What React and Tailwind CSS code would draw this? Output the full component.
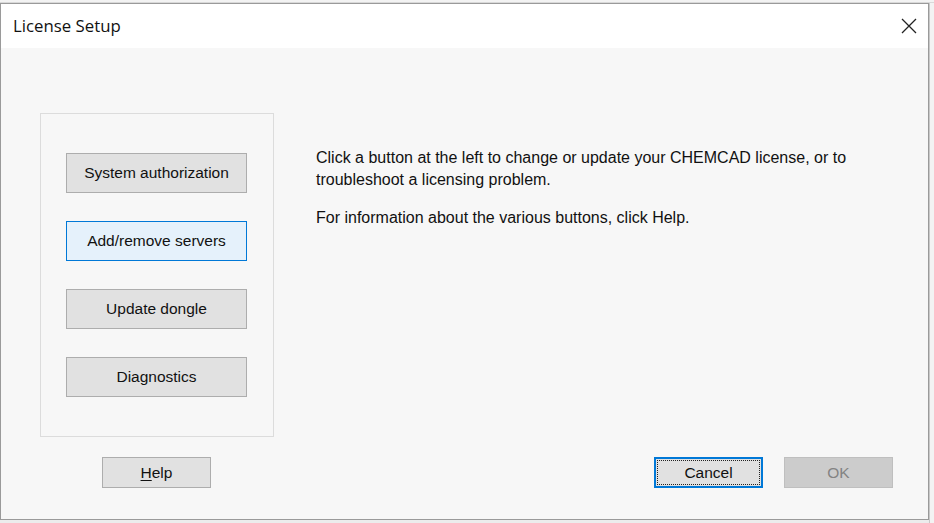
import React from "react";

const btnFont = { fontFamily: '"Liberation Sans", Arial, sans-serif' };

function SideButton({ label, active }) {
  return (
    <button
      className={
        "w-[181px] h-[40px] text-[15.5px] text-[#111] border " +
        (active ? "bg-[#e5f1fb] border-[#0078d7]" : "bg-[#e1e1e1] border-[#adadad]")
      }
      style={btnFont}
    >
      {label}
    </button>
  );
}

export default function App() {
  return (
    <div className="w-[934px] h-[523px] bg-[#ececec] overflow-hidden flex flex-col">
      <div className="h-[3px] shrink-0 bg-[#f3f3f3] border-b border-[#d9d9d9]" />
      <div className="flex flex-1 min-h-0">
        <div className="w-[929px] h-[517px] flex flex-col border border-[#9a9a9a] bg-[#f7f7f7]">
          {/* title bar */}
          <div className="h-[44px] bg-white flex items-center justify-between shrink-0">
            <span
              className="pl-[12px] text-[16.8px] text-[#111]"
              style={{ fontFamily: '"Open Sans", "Noto Sans", sans-serif' }}
            >
              License Setup
            </span>
            <svg width="16" height="16" viewBox="0 0 16 16" className="mr-[11px]">
              <path d="M1 1 L15 15 M15 1 L1 15" stroke="#222" strokeWidth="1.3" />
            </svg>
          </div>

          {/* body */}
          <div className="flex-1 flex flex-col" style={btnFont}>
            <div className="flex pt-[65px]">
              <div className="ml-[39px] w-[234px] h-[324px] border border-[#dcdcdc] flex flex-col pl-[25px] pt-[39px] gap-[28px]">
                <SideButton label="System authorization" />
                <SideButton label="Add/remove servers" active />
                <SideButton label="Update dongle" />
                <SideButton label="Diagnostics" />
              </div>
              <div className="ml-[42px] pt-[34px] text-[16px] leading-[22px] text-[#111]">
                <p>Click a button at the left to change or update your CHEMCAD license, or to</p>
                <p>troubleshoot a licensing problem.</p>
                <p className="mt-[16px]">For information about the various buttons, click Help.</p>
              </div>
            </div>

            <div className="flex items-center mt-[20px]">
              <button className="ml-[101px] w-[109px] h-[31px] bg-[#e1e1e1] border border-[#adadad] text-[15.5px] text-[#111]">
                <span className="underline underline-offset-2">H</span>elp
              </button>
              <button className="ml-[443px] w-[109px] h-[31px] bg-[#e1e1e1] border-2 border-[#0078d7] p-[1px] text-[15.5px] text-[#111]">
                <span className="w-full h-full flex items-center justify-center border border-dotted border-[#222]">
                  Cancel
                </span>
              </button>
              <button className="ml-[21px] w-[109px] h-[31px] bg-[#cccccc] border border-[#bfbfbf] text-[15.5px] text-[#838383]">
                OK
              </button>
            </div>
          </div>
        </div>
        <div className="flex-1 bg-[#f3f3f3] border-l border-[#c8c8c8]" />
      </div>
    </div>
  );
}
